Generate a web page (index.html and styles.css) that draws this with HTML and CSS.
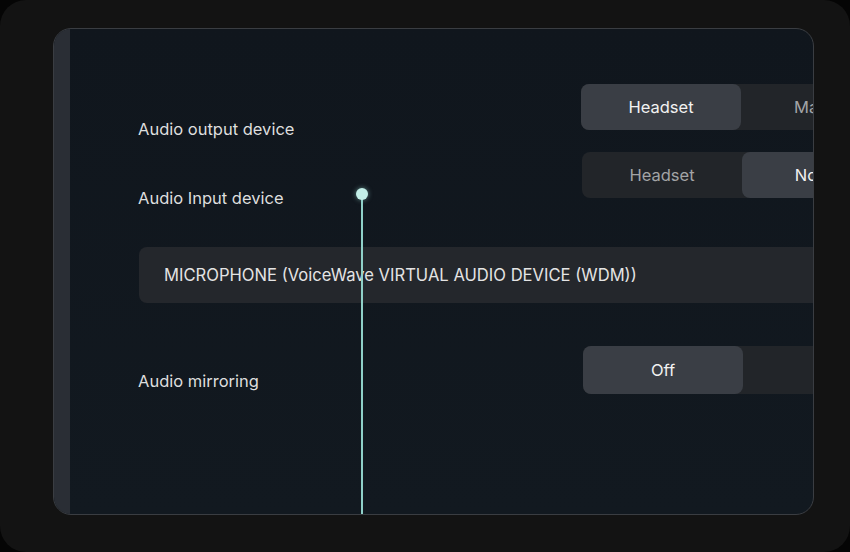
FILE: index.html
```html
<!DOCTYPE html>
<html lang="en">
<head>
<meta charset="utf-8">
<title>Audio settings</title>
<link rel="stylesheet" href="styles.css">
</head>
<body>
<div class="frame">
  <section class="panel">
    <div class="rail"></div>
    <div class="content">
      <div class="row row-output">
        <div class="label">Audio output device</div>
        <div class="segmented">
          <div class="seg active">Headset</div>
          <div class="seg">Master</div>
        </div>
      </div>
      <div class="row row-input">
        <div class="label">Audio Input device</div>
        <div class="segmented">
          <div class="seg">Headset</div>
          <div class="seg active">Normal</div>
        </div>
      </div>
      <div class="select">MICROPHONE (VoiceWave VIRTUAL AUDIO DEVICE (WDM))</div>
      <div class="row row-mirror">
        <div class="label">Audio mirroring</div>
        <div class="segmented">
          <div class="seg active">Off</div>
          <div class="seg wide">On</div>
        </div>
      </div>
    </div>
    <div class="cursor-line"></div>
    <div class="cursor-dot"></div>
  </section>
</div>
</body>
</html>
```

FILE: styles.css
```css
* {
  box-sizing: border-box;
}

html, body {
  margin: 0;
  padding: 0;
  background: #050505;
}

body {
  width: 850px;
  height: 552px;
  overflow: hidden;
  font-family: Inter, "Noto Sans", sans-serif;
}

.frame {
  width: 850px;
  height: 552px;
  border-radius: 26px;
  background: #131313;
  padding: 28px 36px 37px 53px;
}

.panel {
  position: relative;
  height: 100%;
  display: flex;
  border: 1px solid #3a3d42;
  border-radius: 18px;
  overflow: hidden;
  background: linear-gradient(180deg, #10161d 0%, #121920 100%);
}

.rail {
  width: 16px;
  flex: none;
  background: #2a2e35;
}

.content {
  flex: 1;
  min-width: 0;
  padding: 55px 0 0 68px;
  display: flex;
  flex-direction: column;
}

.row {
  display: flex;
  align-items: flex-start;
}

.row-output {
  height: 68px;
}

.row-input {
  height: 95px;
}

.row-mirror {
  margin-top: 43px;
}

.label {
  width: 443px;
  flex: none;
  font-size: 16.5px;
  line-height: 20px;
  color: #dedede;
}

.row-output .label {
  margin-top: 35px;
}

.row-input .label {
  margin-top: 36px;
}

.row-mirror .label {
  margin-top: 25px;
  width: 445px;
}

.row-input .label {
  width: 444px;
}

.segmented {
  flex: none;
  display: flex;
  width: 322px;
  height: 46px;
  border-radius: 8px;
  background: #222529;
}

.row-mirror .segmented {
  height: 48px;
  width: 380px;
}

.seg {
  width: 160px;
  flex: none;
  display: flex;
  align-items: center;
  justify-content: center;
  border-radius: 8px;
  font-size: 16.5px;
  color: #a3a4a6;
}

.seg.wide {
  width: 210px;
}

.seg.active {
  background: #3a3e45;
  color: #f2f2f2;
}

.row-input .seg.active {
  width: 162px;
}

.select {
  width: 720px;
  height: 56px;
  flex: none;
  margin-left: 1px;
  display: flex;
  align-items: center;
  padding-left: 25px;
  border-radius: 8px;
  background: #24272c;
  font-size: 16.6px;
  color: #e4e4e4;
  white-space: nowrap;
}

.cursor-line {
  position: absolute;
  left: 307px;
  top: 165px;
  bottom: 0;
  width: 2px;
  background: #8fd0c8;
}

.cursor-dot {
  position: absolute;
  left: 302px;
  top: 159px;
  width: 12px;
  height: 12px;
  border-radius: 50%;
  background: #c3efe8;
  box-shadow: 0 0 5px rgba(160, 230, 220, 0.55);
}
```
